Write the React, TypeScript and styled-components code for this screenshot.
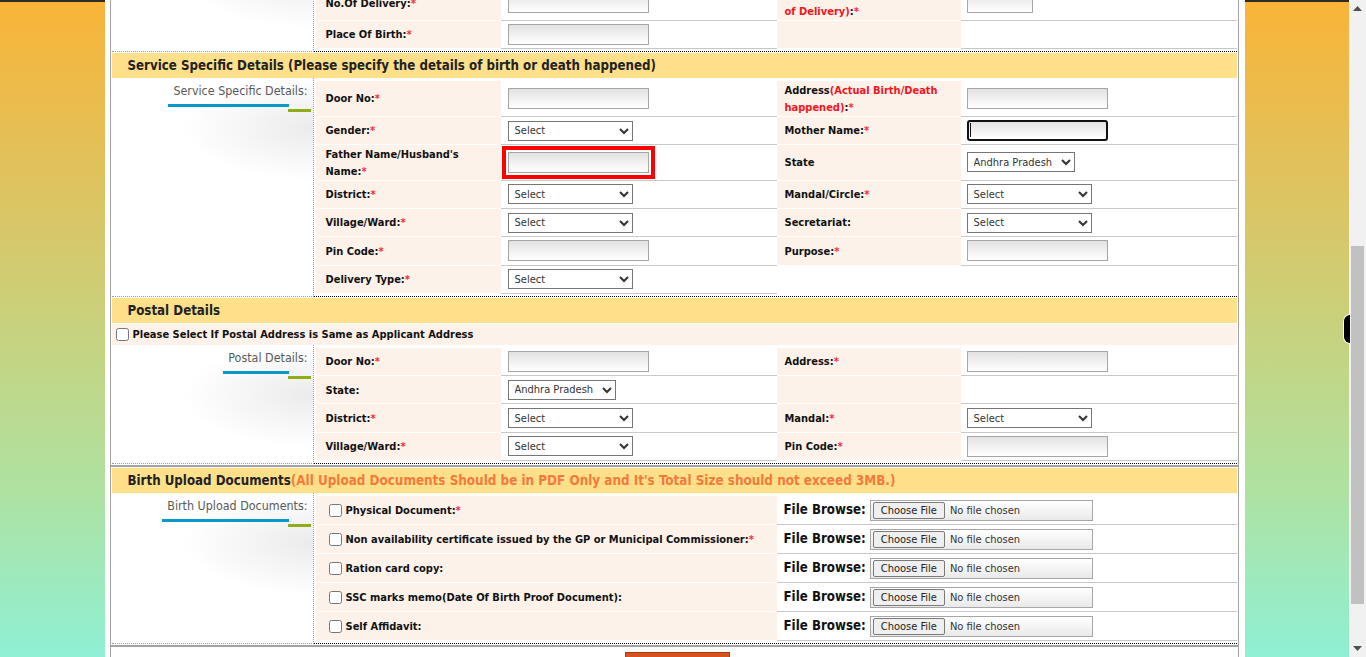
import React, { useLayoutEffect, useRef } from 'react';
import styled, { createGlobalStyle, css } from 'styled-components';

const FONT = `"DejaVu Sans Condensed", "DejaVu Sans", Tahoma, sans-serif`;

const GlobalStyle = createGlobalStyle`
  html, body { margin: 0; padding: 0; height: 100%; overflow: hidden; }
  body {
    font-family: ${FONT};
    background: linear-gradient(#2e2a25 0, #2e2a25 2px, #f9b438 2px, #dcc462 30%, #c8d27e 50%, #aee2a2 75%, #8ff0d4 100%) fixed;
  }
  #root { height: 100%; }
`;

const Shell = styled.div`
  position: relative;
  display: flex;
  height: 100vh;
`;

const Viewport = styled.div`
  flex: 1;
  min-width: 0;
  overflow: hidden;
`;

const Panel = styled.div`
  width: 1140px;
  box-sizing: border-box;
  margin: 0 auto;
  padding: 0 6px 40px 5px;
  background: #fff;
`;

const Box = styled.div`
  border: 1px solid #a3a3a3;
  padding: 1px 1px 0;
  & + & { border-top: 1px solid #a3a3a3; }
`;

const SectionHeader = styled.div`
  height: 25px;
  display: flex;
  align-items: center;
  padding-left: 16px;
  background: #fee08b;
  color: #222;
  font-weight: bold;
  font-size: 13.2px;
  white-space: nowrap;
`;

const Note = styled.span`
  color: #f47a3c;
  font-size: 13.35px;
`;

const SectionBody = styled.div`
  display: flex;
  margin-bottom: 1px;
`;

const SideCol = styled.div`
  width: 201px;
  flex-shrink: 0;
  box-sizing: content-box;
  display: flex;
  justify-content: flex-end;
  align-items: flex-start;
  padding-top: 6px;
  border-right: 1px dotted #9a9a9a;
  border-bottom: 1px dotted #9a9a9a;
  background: radial-gradient(ellipse 130px 52px at 100% 50px, #ebebeb 0%, rgba(255, 255, 255, 0) 100%), #fff;
`;

const SideTitle = styled.div`
  display: flex;
  flex-direction: column;
  margin-right: 2px;
`;

const SideText = styled.span`
  padding: 0 3px 0 5px;
  font-size: 12.4px;
  line-height: 14px;
  text-align: right;
  color: #5a5a5a;
  white-space: nowrap;
`;

const Underline = styled.div`
  display: flex;
  margin-top: 6px;
`;

const BlueBar = styled.div`
  flex: 1;
  height: 3px;
  background: #0a97c9;
`;

const GreenBar = styled.div`
  width: 23px;
  height: 3px;
  margin: 5px 0 0 -1px;
  background: #8fac1a;
`;

const TableArea = styled.div`
  flex: 1;
  padding: 3px 0 2px 2px;
  border-bottom: 1px dotted #000;
`;

const Grid = styled.div`
  display: grid;
  grid-template-columns: 185px 276px 184px 276px;
`;

const LabelCell = styled.div<{ $right?: boolean; $span?: boolean }>`
  display: flex;
  align-items: center;
  min-height: 28.3px;
  box-sizing: border-box;
  padding: 0.5px 6px 0 ${(p) => (p.$right ? 8 : 10)}px;
  background: #fdf2e9;
  border-bottom: 1px solid #fff;
  font-size: 11px;
  font-weight: bold;
  line-height: 17px;
  color: #111;
  ${(p) =>
    p.$span &&
    css`
      grid-column: span 2;
      padding-left: 9px;
      min-height: 29px;
    `}
`;

const LabelText = styled.span``;

const Red = styled.span`
  color: #f3141e;
`;

const Star = styled.span`
  color: #f52a45;
`;

const FieldCell = styled.div<{ $right?: boolean }>`
  display: flex;
  align-items: center;
  min-height: 28.3px;
  box-sizing: border-box;
  padding-left: ${(p) => (p.$right ? 6 : 7)}px;
  border-bottom: 1px solid #c8c8c8;
`;

const FileCell = styled(FieldCell)`
  grid-column: span 2;
  min-height: 29px;
`;

const EmptyCell = styled.div`
  grid-column: span 2;
`;

const TextInput = styled.input<{ $w?: number; $focus?: boolean; $flag?: boolean }>`
  width: ${(p) => p.$w ?? 141}px;
  height: 21px;
  box-sizing: border-box;
  margin: 0;
  padding: 0 4px;
  border: 1px solid #a6a6a6;
  background: linear-gradient(#e2e2e2, #ffffff);
  font: 11px ${FONT};
  ${(p) =>
    p.$focus &&
    css`
      border: 2px solid #111;
      border-radius: 3px;
      background: linear-gradient(#111, #111) 1px 1px / 1px 14px no-repeat, linear-gradient(#e2e2e2, #ffffff);
    `}
  ${(p) =>
    p.$flag &&
    css`
      outline: 4px solid #ff0000;
      outline-offset: 2px;
    `}
`;

const Select = styled.select<{ $w?: number }>`
  width: ${(p) => p.$w ?? 125}px;
  height: 20px;
  margin: 0;
  padding: 0 2px;
  border: 1px solid #767676;
  border-radius: 0;
  background: #fff;
  color: #333;
  font: 11px ${FONT};
`;

const CheckRow = styled.div`
  display: flex;
  align-items: center;
  height: 21px;
  margin: 1px 0 0;
  background: #fdf2e9;
  font-size: 11px;
  font-weight: bold;
  color: #111;
`;

const Check = styled.input`
  width: 13px;
  height: 13px;
  margin: 3px 3px 3px 4px;
  flex-shrink: 0;
`;

const CheckText = styled.span`
  margin-left: 1px;
`;

const BrowseLabel = styled.span`
  margin: 0 4px 1px 1px;
  font-size: 13.2px;
  font-weight: bold;
  line-height: 16px;
  color: #111;
  white-space: nowrap;
`;

const FileInput = styled.input`
  width: 223px;
  height: 21px;
  box-sizing: border-box;
  margin: 0;
  padding: 1px 2px;
  border: 1px solid #a6a6a6;
  background: linear-gradient(#ffffff, #e9e9e9);
  font: 11px ${FONT};
  color: #333;
  &::file-selector-button {
    height: 17px;
    margin: 0 5px 0 0;
    padding: 0 7px;
    border: 1px solid #7a7a7a;
    border-radius: 2px;
    background: #efefef;
    color: #222;
    font: 11px ${FONT};
  }
`;

const ButtonBar = styled.div`
  padding: 4px 0 12px;
  text-align: center;
`;

const SubmitButton = styled.button`
  width: 105px;
  height: 30px;
  margin-left: 6px;
  border: 1px solid #a93c12;
  background: #d9531e;
  color: #fff;
  font: bold 13px ${FONT};
`;

const ScrollBar = styled.div`
  width: 17px;
  flex-shrink: 0;
  display: flex;
  flex-direction: column;
  background: #f1f1f1;
`;

const Arrow = styled.div`
  height: 17px;
  display: flex;
  align-items: center;
  justify-content: center;
`;

const Track = styled.div`
  flex: 1;
  padding: 0 2px;
`;

const Thumb = styled.div`
  height: 358px;
  margin-top: 229px;
  background: #c1c1c1;
`;

const SideTab = styled.div`
  position: absolute;
  top: 314px;
  right: 16px;
  width: 6px;
  height: 28px;
  border: 1px solid #fff;
  border-right: none;
  border-radius: 7px 0 0 7px;
  background: #000;
`;

type Field =
  | { kind: 'input'; w?: number; focus?: boolean; flag?: boolean }
  | { kind: 'select'; text?: string; w?: number }
  | { kind: 'none' };

type Label = { text: string; red?: string; red2?: string; star?: boolean; after?: string };

type Row = { l: Label; lf: Field; r?: Label | null; rf?: Field };

const inp = (o: Partial<{ w: number; focus: boolean; flag: boolean }> = {}): Field => ({ kind: 'input', ...o });
const sel = (text = 'Select', w?: number): Field => ({ kind: 'select', text, w });
const AP = sel('Andhra Pradesh', 108);

const renderLabel = (l: Label) => (
  <LabelText>
    {l.text}
    {l.red && <Red>{l.red}</Red>}
    {l.red2 && (
      <>
        <br />
        <Red>{l.red2}</Red>
      </>
    )}
    {l.after ?? ':'}
    {l.star && <Star>*</Star>}
  </LabelText>
);

const renderField = (f: Field) => {
  if (f.kind === 'input') return <TextInput type="text" $w={f.w} $focus={f.focus} $flag={f.flag} readOnly />;
  if (f.kind === 'select')
    return (
      <Select $w={f.w} defaultValue={f.text}>
        <option>{f.text}</option>
      </Select>
    );
  return null;
};

const FormRows: React.FC<{ rows: Row[]; markRef?: React.Ref<HTMLDivElement>; markIndex?: number }> = ({
  rows,
  markRef,
  markIndex,
}) => (
  <Grid>
    {rows.map((row, i) => (
      <React.Fragment key={i}>
        <LabelCell ref={i === markIndex ? markRef : undefined}>{renderLabel(row.l)}</LabelCell>
        <FieldCell>{renderField(row.lf)}</FieldCell>
        {row.r === undefined ? (
          <EmptyCell />
        ) : (
          <>
            <LabelCell $right>{row.r ? renderLabel(row.r) : null}</LabelCell>
            <FieldCell $right>{row.rf ? renderField(row.rf) : null}</FieldCell>
          </>
        )}
      </React.Fragment>
    ))}
  </Grid>
);

const Side: React.FC<{ title: string }> = ({ title }) => (
  <SideCol>
    <SideTitle>
      <SideText>{title}</SideText>
      <Underline>
        <BlueBar />
        <GreenBar />
      </Underline>
    </SideTitle>
  </SideCol>
);

const birthRows: Row[] = [
  { l: { text: 'Child Name', star: true }, lf: inp(), r: { text: 'Date Of Birth', star: true }, rf: inp({ w: 65 }) },
  { l: { text: 'Hospital Name', star: true }, lf: inp(), r: { text: 'Time Of Birth', star: true }, rf: inp({ w: 65 }) },
  {
    l: { text: 'No.Of Delivery', star: true },
    lf: inp(),
    r: { text: 'Birth Order', red: '(Date', red2: 'of Delivery)', star: true },
    rf: inp({ w: 66 }),
  },
  { l: { text: 'Place Of Birth', star: true }, lf: inp(), r: null, rf: { kind: 'none' } },
];

const serviceRows: Row[] = [
  {
    l: { text: 'Door No', star: true },
    lf: inp(),
    r: { text: 'Address', red: '(Actual Birth/Death happened)', star: true },
    rf: inp(),
  },
  { l: { text: 'Gender', star: true }, lf: sel(), r: { text: 'Mother Name', star: true }, rf: inp({ focus: true }) },
  { l: { text: "Father Name/Husband's Name", star: true }, lf: inp({ flag: true }), r: { text: 'State', after: '' }, rf: AP },
  { l: { text: 'District', star: true }, lf: sel(), r: { text: 'Mandal/Circle', star: true }, rf: sel() },
  { l: { text: 'Village/Ward', star: true }, lf: sel(), r: { text: 'Secretariat' }, rf: sel() },
  { l: { text: 'Pin Code', star: true }, lf: inp(), r: { text: 'Purpose', star: true }, rf: inp() },
  { l: { text: 'Delivery Type', star: true }, lf: sel() },
];

const postalRows: Row[] = [
  { l: { text: 'Door No', star: true }, lf: inp(), r: { text: 'Address', star: true }, rf: inp() },
  { l: { text: 'State' }, lf: AP, r: null, rf: { kind: 'none' } },
  { l: { text: 'District', star: true }, lf: sel(), r: { text: 'Mandal', star: true }, rf: sel() },
  { l: { text: 'Village/Ward', star: true }, lf: sel(), r: { text: 'Pin Code', star: true }, rf: inp() },
];

const uploads: { text: string; star?: boolean }[] = [
  { text: 'Physical Document:', star: true },
  { text: 'Non availability certificate issued by the GP or Municipal Commissioner:', star: true },
  { text: 'Ration card copy:' },
  { text: 'SSC marks memo(Date Of Birth Proof Document):' },
  { text: 'Self Affidavit:' },
];

const ArrowIcon: React.FC<{ down?: boolean }> = ({ down }) => (
  <svg width="9" height="5" viewBox="0 0 9 5">
    <path d={down ? 'M0 0 H9 L4.5 5 Z' : 'M0 5 H9 L4.5 0 Z'} fill="#505050" />
  </svg>
);

export default function App() {
  const viewRef = useRef<HTMLDivElement>(null);
  const markRef = useRef<HTMLDivElement>(null);

  useLayoutEffect(() => {
    const v = viewRef.current;
    const m = markRef.current;
    if (!v || !m) return;
    const top = m.getBoundingClientRect().top - v.getBoundingClientRect().top + v.scrollTop;
    v.scrollTop = Math.round(top) - 21;
  }, []);

  return (
    <>
      <GlobalStyle />
      <Shell>
        <Viewport ref={viewRef}>
          <Panel>
            <Box>
              <SectionHeader>Birth Details</SectionHeader>
              <SectionBody>
                <Side title="Birth Details:" />
                <TableArea>
                  <FormRows rows={birthRows} markRef={markRef} markIndex={3} />
                </TableArea>
              </SectionBody>

              <SectionHeader>Service Specific Details (Please specify the details of birth or death happened)</SectionHeader>
              <SectionBody>
                <Side title="Service Specific Details:" />
                <TableArea>
                  <FormRows rows={serviceRows} />
                </TableArea>
              </SectionBody>

              <SectionHeader>Postal Details</SectionHeader>
              <CheckRow>
                <Check type="checkbox" />
                <CheckText>Please Select If Postal Address is Same as Applicant Address</CheckText>
              </CheckRow>
              <SectionBody>
                <Side title="Postal Details:" />
                <TableArea>
                  <FormRows rows={postalRows} />
                </TableArea>
              </SectionBody>
            </Box>

            <Box>
              <SectionHeader>
                Birth Upload Documents
                <Note>(All Upload Documents Should be in PDF Only and It's Total Size should not exceed 3MB.)</Note>
              </SectionHeader>
              <SectionBody>
                <Side title="Birth Upload Documents:" />
                <TableArea>
                  <Grid>
                    {uploads.map((u) => (
                      <React.Fragment key={u.text}>
                        <LabelCell $span>
                          <Check type="checkbox" />
                          <CheckText>
                            {u.text}
                            {u.star && <Star>*</Star>}
                          </CheckText>
                        </LabelCell>
                        <FileCell $right>
                          <BrowseLabel>File Browse:</BrowseLabel>
                          <FileInput type="file" />
                        </FileCell>
                      </React.Fragment>
                    ))}
                  </Grid>
                </TableArea>
              </SectionBody>
            </Box>

            <Box>
              <ButtonBar>
                <SubmitButton type="button">Submit</SubmitButton>
              </ButtonBar>
            </Box>
          </Panel>
        </Viewport>
        <ScrollBar>
          <Arrow>
            <ArrowIcon />
          </Arrow>
          <Track>
            <Thumb />
          </Track>
          <Arrow>
            <ArrowIcon down />
          </Arrow>
        </ScrollBar>
        <SideTab />
      </Shell>
    </>
  );
}
